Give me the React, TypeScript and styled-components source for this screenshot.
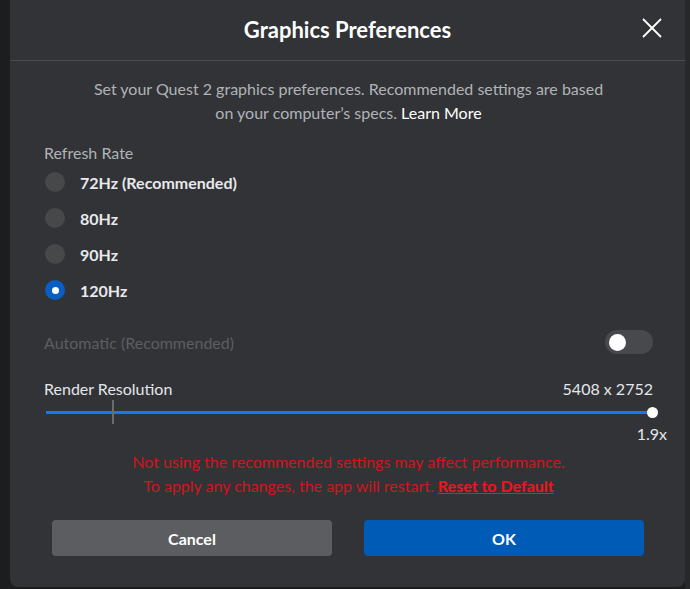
import styled, {createGlobalStyle} from "styled-components";
import {useState} from "react";

const GlobalStyle = createGlobalStyle`
  html, body {
    margin: 0;
    padding: 0;
    background: #1c1d1f;
    font-family: "Segoe UI", Lato, "Noto Sans", sans-serif;
  }
  * { box-sizing: border-box; }
`;

const rates = ["72Hz (Recommended)", "80Hz", "90Hz", "120Hz"];

export default function App() {
    const [rate, setRate] = useState<number>(3);
    const [auto, setAuto] = useState<boolean>(false);

    return (
        <Page>
            <GlobalStyle/>
            <Backdrop side="left"/>
            <Modal>
                <Header>
                    <Title>Graphics Preferences</Title>
                    <CloseButton aria-label="Close">
                        <svg width="20" height="20" viewBox="0 0 20 20">
                            <path d="M1 1 L19 19 M19 1 L1 19" stroke="#fff" strokeWidth="1.8" fill="none"/>
                        </svg>
                    </CloseButton>
                </Header>
                <Body>
                    <Intro>
                        Set your Quest 2 graphics preferences. Recommended settings are based<br/>
                        on your computer’s specs. <IntroLink>Learn More</IntroLink>
                    </Intro>

                    <SectionLabel>Refresh Rate</SectionLabel>
                    <RadioList>
                        {rates.map((r, i) => (
                            <RadioRow key={r} onClick={() => setRate(i)}>
                                <RadioDot checked={rate === i}/>
                                <RadioText>{r}</RadioText>
                            </RadioRow>
                        ))}
                    </RadioList>

                    <AutoRow>
                        <AutoLabel>Automatic (Recommended)</AutoLabel>
                        <Toggle on={auto} onClick={() => setAuto(!auto)}>
                            <Knob on={auto}/>
                        </Toggle>
                    </AutoRow>

                    <ResHeader>
                        <ResLabel>Render Resolution</ResLabel>
                        <ResLabel>5408 x 2752</ResLabel>
                    </ResHeader>
                    <Slider>
                        <Track/>
                        <Tick style={{left: "66px"}}/>
                        <Thumb/>
                    </Slider>
                    <Scale>1.9x</Scale>

                    <Warning>
                        Not using the recommended settings may affect performance.<br/>
                        To apply any changes, the app will restart. <ResetLink>Reset to Default</ResetLink>
                    </Warning>

                    <Buttons>
                        <Button variant="secondary">Cancel</Button>
                        <Button variant="primary">OK</Button>
                    </Buttons>
                </Body>
            </Modal>
            <Backdrop side="right"/>
        </Page>
    );
}

const Page = styled.div`
  display: grid;
  grid-template-columns: 10px 675px 1fr;
  height: 589px;
  overflow: hidden;
`;

const Backdrop = styled.div<{side: "left" | "right"}>`
  background: ${p => p.side === "left" ? "#1c1d1f" : "#27282a"};
`;

const Modal = styled.div`
  background: #323336;
  height: 587px;
  border-radius: 0 0 8px 8px;
  display: flex;
  flex-direction: column;
`;

const Header = styled.header`
  position: relative;
  height: 61px;
  display: flex;
  align-items: center;
  justify-content: center;
  border-bottom: 1px solid #4b4c4f;
  padding-bottom: 2px;
`;

const Title = styled.h1`
  margin: 0;
  font-size: 22px;
  font-weight: 700;
  color: #ffffff;
`;

const CloseButton = styled.button`
  position: absolute;
  right: 23px;
  top: 18px;
  background: none;
  border: none;
  padding: 0;
  width: 20px;
  height: 20px;
  cursor: pointer;
`;

const Body = styled.div`
  padding: 16px 32px 0 34px;
  display: flex;
  flex-direction: column;
  font-size: 16px;
`;

const Intro = styled.p`
  margin: 0;
  text-align: center;
  line-height: 24px;
  color: #b0b3b8;
`;

const IntroLink = styled.span`
  color: #ffffff;
  cursor: pointer;
`;

const SectionLabel = styled.div`
  margin-top: 18px;
  line-height: 20px;
  color: #b0b3b8;
`;

const RadioList = styled.div`
  display: flex;
  flex-direction: column;
  gap: 16px;
  margin-top: 9px;
`;

const RadioRow = styled.div`
  display: flex;
  align-items: center;
  gap: 15px;
  height: 20px;
  cursor: pointer;
`;

const RadioDot = styled.span<{checked: boolean}>`
  width: 20px;
  height: 20px;
  border-radius: 50%;
  margin-left: 1px;
  background: ${p => p.checked ? "#0a5dc2" : "#474849"};
  display: flex;
  align-items: center;
  justify-content: center;
  &::after {
    content: "";
    width: 7px;
    height: 7px;
    border-radius: 50%;
    background: #ffffff;
    display: ${p => p.checked ? "block" : "none"};
  }
`;

const RadioText = styled.span`
  font-weight: 700;
  color: #e8e9ec;
`;

const AutoRow = styled.div`
  margin-top: 30px;
  display: flex;
  align-items: center;
  justify-content: space-between;
  height: 24px;
`;

const AutoLabel = styled.span`
  color: #5c5e62;
`;

const Toggle = styled.div<{on: boolean}>`
  width: 48px;
  height: 24px;
  border-radius: 12px;
  background: ${p => p.on ? "#0a5dc2" : "#48494c"};
  display: flex;
  align-items: center;
  justify-content: ${p => p.on ? "flex-end" : "flex-start"};
  padding: 0 4px;
  cursor: pointer;
`;

const Knob = styled.span<{on: boolean}>`
  width: 17px;
  height: 17px;
  border-radius: 50%;
  background: #ffffff;
`;

const ResHeader = styled.div`
  margin-top: 24px;
  display: flex;
  justify-content: space-between;
  height: 20px;
  align-items: center;
`;

const ResLabel = styled.span`
  color: #e4e6eb;
`;

const Slider = styled.div`
  position: relative;
  margin-top: 2px;
  margin-left: 2px;
  height: 24px;
  display: flex;
  align-items: center;
`;

const Track = styled.div`
  flex: 1;
  height: 3px;
  background: #1877f2;
`;

const Tick = styled.span`
  position: absolute;
  top: 0;
  width: 2px;
  height: 24px;
  background: #6b6c6f;
`;

const Thumb = styled.span`
  position: absolute;
  right: -5px;
  top: 7px;
  width: 11px;
  height: 11px;
  border-radius: 50%;
  background: #ffffff;
`;

const Scale = styled.div`
  align-self: flex-end;
  margin-top: 0;
  margin-right: -14px;
  line-height: 20px;
  color: #e4e6eb;
`;

const Warning = styled.p`
  margin: 6px 0 0;
  text-align: center;
  line-height: 24px;
  color: #d0151d;
`;

const ResetLink = styled.span`
  color: #f0141e;
  font-weight: 700;
  text-decoration: underline;
  cursor: pointer;
`;

const Buttons = styled.div`
  margin-top: 22px;
  display: grid;
  grid-template-columns: 280px 280px;
  justify-content: space-between;
  padding: 0 9px 0 8px;
`;

const Button = styled.button<{variant: "primary" | "secondary"}>`
  height: 36px;
  border: none;
  border-radius: 4px;
  background: ${p => p.variant === "primary" ? "#005bb7" : "#5c5d60"};
  color: #ffffff;
  font-family: inherit;
  font-size: 16px;
  font-weight: 700;
  cursor: pointer;
`;
